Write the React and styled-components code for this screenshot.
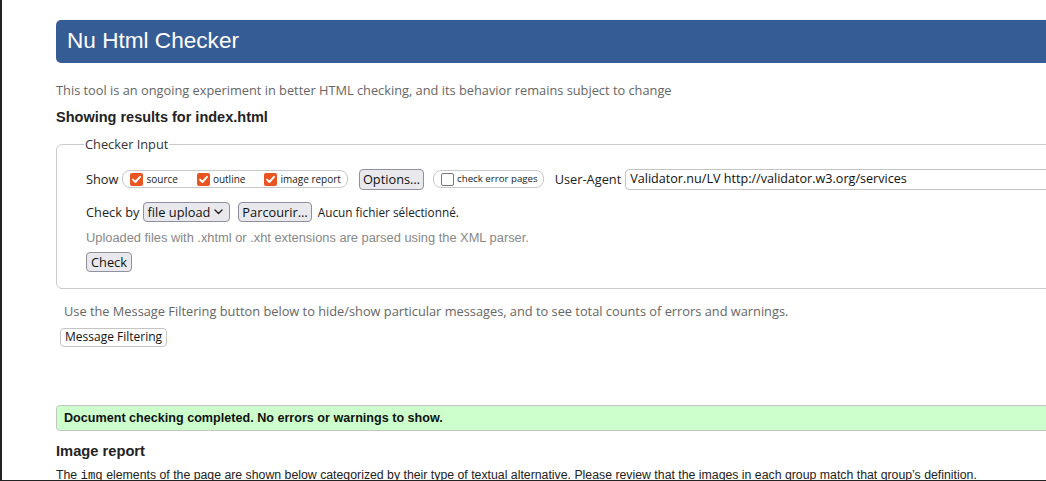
import React from 'react';
import styled, { createGlobalStyle } from 'styled-components';

const GlobalStyle = createGlobalStyle`
  * { box-sizing: border-box; }
  html, body { margin: 0; padding: 0; background: #fff; }
  body { width: 1046px; height: 481px; overflow: hidden; }
`;

const ui = `"Open Sans", "Noto Sans", sans-serif`;
const arial = `"Liberation Sans", Arial, sans-serif`;

const Frame = styled.div`
  width: 1046px;
  height: 481px;
  overflow: hidden;
  border-left: 2px solid #222;
  border-bottom: 1px solid #222;
  background: #fff;
`;

const Page = styled.div`
  width: 1120px;
  margin-left: 54px;
  font-family: ${arial};
  color: #222;
`;

const Header = styled.h1`
  margin: 20px 0 0;
  height: 43px;
  background: #365c95;
  border-radius: 5px;
  color: #fff;
  font: 400 22.6px/42px ${arial};
  padding-left: 11px;
`;

const Intro = styled.p`
  margin: 19px 0 0;
  font: 400 12.8px/16px ${ui};
  color: #666;
`;

const Title = styled.h2`
  margin: 10px 0 0;
  font: 700 14.5px/18px ${arial};
  color: #222;
`;

const Fieldset = styled.fieldset`
  margin: 10px 0 0;
  padding: 16px 0 16px 29px;
  border: 1px solid #ccc;
  border-radius: 6px;
  min-width: 0;
`;

const Legend = styled.legend`
  margin-left: -2px;
  padding: 0 1px;
  font: 400 12.8px/16px ${ui};
  color: #333;
`;

const Row = styled.div`
  display: flex;
  align-items: center;
  height: 22px;
  margin-top: ${(p) => p.$top || 0}px;
  font: 400 12.8px/16px ${ui};
  color: #222;
  white-space: nowrap;
`;

const Label = styled.span`
  margin-right: ${(p) => p.$gap || 4}px;
`;

const Pill = styled.span`
  display: inline-flex;
  align-items: center;
  height: 18px;
  padding: 0 ${(p) => p.$right || 6}px 0 7px;
  border: 1px solid #c8c8c8;
  border-radius: 8px;
  gap: 19px;
  margin-right: ${(p) => p.$gap || 0}px;
`;

const Opt = styled.span`
  display: inline-flex;
  align-items: center;
  gap: 3px;
  font: 400 ${(p) => p.$size || 10}px/14px ${ui};
  color: #222;
`;

const Box = styled.span`
  display: inline-flex;
  align-items: center;
  justify-content: center;
  width: 13px;
  height: 13px;
  border-radius: 2px;
  background: ${(p) => (p.$on ? '#e95420' : '#fff')};
  border: ${(p) => (p.$on ? 'none' : '1.5px solid #777')};
`;

const Button = styled.span`
  display: inline-flex;
  align-items: center;
  height: ${(p) => p.$h || 21}px;
  padding: 0 ${(p) => p.$pad || 5}px;
  background: ${(p) => (p.$plain ? '#fff' : '#e9e9ed')};
  border: 1px solid ${(p) => (p.$plain ? '#c4c4c4' : '#8f8f9d')};
  border-radius: 4px;
  font: 400 ${(p) => p.$size || 12.8}px/16px ${ui};
  color: #111;
  margin-right: ${(p) => p.$gap || 0}px;
`;

const Select = styled(Button)`
  gap: 4px;
  padding: 0 6px 0 4px;
`;

const FileName = styled.span`
  font-size: 11.8px;
`;

const Input = styled.span`
  display: inline-flex;
  align-items: center;
  flex: 1;
  height: 21px;
  padding: 0 4px;
  border: 1px solid #c4c4c4;
  border-radius: 4px;
  font: 400 12.6px/16px ${ui};
  color: #111;
`;

const Hint = styled.div`
  margin-top: 7px;
  font: 400 12.85px/16px ${arial};
  color: #888;
`;

const CheckWrap = styled.div`
  margin-top: 6px;
  height: 20px;
`;

const Note = styled.p`
  margin: 14px 0 0 8px;
  font: 400 12.8px/16px ${ui};
  color: #666;
`;

const FilterWrap = styled.div`
  margin: 8px 0 0 4px;
  height: 19px;
`;

const Success = styled.div`
  margin-top: 59px;
  height: 26px;
  background: #ccffcc;
  border: 1px solid #c4c4c4;
  border-radius: 4px;
  padding-left: 7px;
  font: 700 12.6px/24px ${arial};
  color: #111;
`;

const SubTitle = styled.h2`
  margin: 11px 0 0;
  font: 700 14.7px/18px ${arial};
  color: #222;
`;

const Body = styled.p`
  margin: 7px 0 0;
  font: 400 12.3px/16px ${arial};
  color: #222;
  white-space: nowrap;
`;

const Code = styled.code`
  font: 400 12.3px ${`"Liberation Mono", "DejaVu Sans Mono", monospace`};
`;

const Tick = () => (
  <svg width="11" height="11" viewBox="0 0 11 11">
    <path d="M2 5.6 L4.4 8 L9 2.8" fill="none" stroke="#fff" strokeWidth="1.9" strokeLinecap="round" strokeLinejoin="round" />
  </svg>
);

const Chevron = () => (
  <svg width="9" height="6" viewBox="0 0 9 6">
    <path d="M1 1 L4.5 4.5 L8 1" fill="none" stroke="#222" strokeWidth="1.4" strokeLinecap="round" strokeLinejoin="round" />
  </svg>
);

const CheckOpt = ({ on, size, children }) => (
  <Opt $size={size}>
    <Box $on={on}>{on && <Tick />}</Box>
    {children}
  </Opt>
);

const App = () => (
  <>
    <GlobalStyle />
    <Frame>
      <Page>
        <Header>Nu Html Checker</Header>
        <Intro>This tool is an ongoing experiment in better HTML checking, and its behavior remains subject to change</Intro>
        <Title>Showing results for index.html</Title>
        <Fieldset>
          <Legend>Checker Input</Legend>
          <Row>
            <Label $gap={4}>Show</Label>
            <Pill $gap={11}>
              <CheckOpt on>source</CheckOpt>
              <CheckOpt on>outline</CheckOpt>
              <CheckOpt on>image report</CheckOpt>
            </Pill>
            <Button $gap={9} $pad={3}>Options…</Button>
            <Pill $gap={11} $right={5}>
              <CheckOpt size={9.7}>check error pages</CheckOpt>
            </Pill>
            <Label $gap={4}>User-Agent</Label>
            <Input>Validator.nu/LV http://validator.w3.org/services</Input>
          </Row>
          <Row $top={11}>
            <Label $gap={3}>Check by</Label>
            <Select $h={20} $gap={8}>
              file upload
              <Chevron />
            </Select>
            <Button $h={20} $gap={6} $pad={3}>Parcourir…</Button>
            <FileName>Aucun fichier sélectionné.</FileName>
          </Row>
          <Hint>Uploaded files with .xhtml or .xht extensions are parsed using the XML parser.</Hint>
          <CheckWrap>
            <Button $h={20} $pad={4}>Check</Button>
          </CheckWrap>
        </Fieldset>
        <Note>Use the Message Filtering button below to hide/show particular messages, and to see total counts of errors and warnings.</Note>
        <FilterWrap>
          <Button $h={19} $plain $pad={4} $size={12}>Message Filtering</Button>
        </FilterWrap>
        <Success>Document checking completed. No errors or warnings to show.</Success>
        <SubTitle>Image report</SubTitle>
        <Body>
          The <Code>img</Code> elements of the page are shown below categorized by their type of textual alternative. Please review that the images in each group match that group’s definition.
        </Body>
      </Page>
    </Frame>
  </>
);

export default App;
